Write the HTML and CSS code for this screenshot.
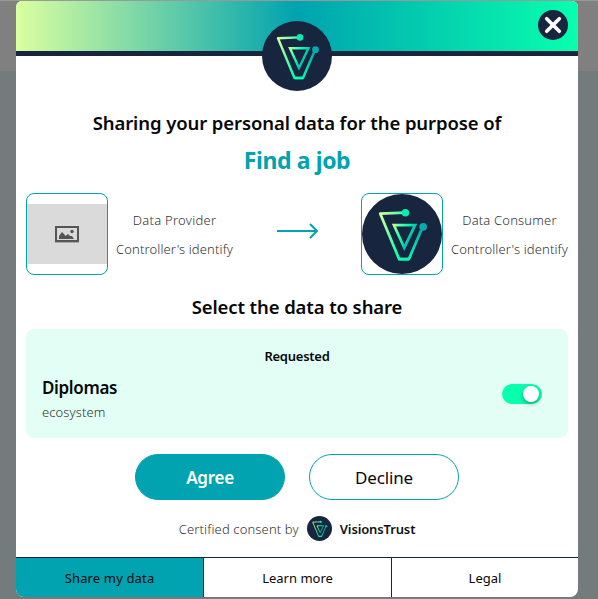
FILE: index.html
```html
<!DOCTYPE html>
<html lang="en">
<head>
<meta charset="utf-8">
<title>VisionsTrust consent</title>
<link rel="stylesheet" href="styles.css">
</head>
<body>
<svg class="defs" width="0" height="0">
  <defs>
    <linearGradient id="stroke-a" gradientUnits="userSpaceOnUse" x1="15" y1="18" x2="40" y2="25"><stop offset="0" stop-color="#dbffa0"/><stop offset="1" stop-color="#08ffae"/></linearGradient>
    <linearGradient id="stroke-b" gradientUnits="userSpaceOnUse" x1="36" y1="58" x2="53" y2="29"><stop offset="0" stop-color="#08ffae"/><stop offset="1" stop-color="#00a8b0"/></linearGradient>
    <linearGradient id="stroke-c" gradientUnits="userSpaceOnUse" x1="27" y1="28" x2="46" y2="38"><stop offset="0" stop-color="#b8ff9f"/><stop offset=".5" stop-color="#08ffae"/><stop offset="1" stop-color="#00a8b0"/></linearGradient>
    <symbol id="logo" viewBox="0 0 70 70">
      <circle cx="35" cy="35" r="35" fill="#17253f"/>
      <g fill="none" stroke-width="2.4" stroke-linejoin="round">
        <path d="M38 16.400 16 17.200 32.500 57H41" stroke="url(#stroke-a)"/>
        <path d="M32.500 57H41L53 29" stroke="url(#stroke-b)"/>
        <path d="M28 27.300H46.500L37 47Z" stroke="url(#stroke-c)" stroke-linejoin="miter"/>
      </g>
      <circle cx="38" cy="16.400" r="3.300" fill="#08edb0"/>
      <circle cx="53.500" cy="28.700" r="3.400" fill="#00aaae"/>
    </symbol>
  </defs>
</svg>
<main class="modal">
  <header class="banner">
    <svg class="banner-logo"><use href="#logo"/></svg>
    <button class="close" aria-label="Close"><svg viewBox="0 0 30 30"><path d="M8.700 8.700 21.300 21.300M21.300 8.700 8.700 21.300"/></svg></button>
  </header>
  <section class="content">
    <h1 class="title"><span class="t-title">Sharing your personal data for the purpose of</span></h1>
    <p class="purpose"><span class="t-purpose">Find a job</span></p>
    <div class="parties">
      <div class="party">
        <div class="thumb"><div class="placeholder"><svg viewBox="0 0 24 17"><path fill="#aaa" d="M0 15H24V17H0Z"/><path fill="#555" fill-rule="evenodd" d="M0 0H24V16H0ZM2 2V14H22V2Z"/><path fill="#555" d="M4 13V10L7 6 9 8 10.500 10 13 8 15 10 17 10 19 13Z"/><circle cx="17" cy="5.500" r="1.700" fill="#555"/></svg></div></div>
        <div class="who"><span class="t-prov">Data Provider</span><span class="t-ident">Controller's identify</span></div>
      </div>
      <svg class="arrow" viewBox="0 0 42 16"><path d="M0 8H40M33 1 40 8 33 15"/></svg>
      <div class="party">
        <div class="thumb"><svg class="thumb-logo"><use href="#logo"/></svg></div>
        <div class="who"><span class="t-cons">Data Consumer</span><span class="t-ident">Controller's identify</span></div>
      </div>
    </div>
    <h2 class="select"><span class="t-select">Select the data to share</span></h2>
    <div class="card">
      <h3 class="requested"><span class="t-req">Requested</span></h3>
      <div class="row">
        <div class="item"><span class="t-dip">Diplomas</span><span class="t-eco">ecosystem</span></div>
        <div class="toggle"><i class="knob"></i></div>
      </div>
    </div>
    <div class="actions">
      <button class="btn primary"><span class="t-agree">Agree</span></button>
      <button class="btn"><span class="t-decline">Decline</span></button>
    </div>
    <div class="certified"><span class="t-cert">Certified consent by</span><svg class="mini"><use href="#logo"/></svg><span class="t-vt">VisionsTrust</span></div>
  </section>
  <nav class="tabs">
    <a class="tab active"><span class="t-share">Share my data</span></a>
    <a class="tab"><span class="t-learn">Learn more</span></a>
    <a class="tab"><span class="t-legal">Legal</span></a>
  </nav>
</main>
</body>
</html>
```

FILE: styles.css
```css
* { box-sizing: border-box; }
body { margin: 0; height: 599px; overflow: hidden; padding: 1px 20px 0 16px; font-family: "Noto Sans", sans-serif; color: #080808; background: linear-gradient(#999 0 1px, #808080 1px 71px, #737b7c 71px); }
h1, h2, h3, p { margin: 0; }
button { padding: 0; font: inherit; color: inherit; }
span { white-space: nowrap; }
.defs { position: absolute; }
.modal { width: 562px; height: 596px; display: flex; flex-direction: column; overflow: hidden; border-radius: 6px 6px 8px 8px; background: #fff; }
.banner { position: relative; flex: none; height: 55px; border-bottom: 5px solid #17253f; background: linear-gradient(90deg, #dbffa0, #00a3af 50%, #08ffae) padding-box; }
.banner-logo { position: absolute; left: 246px; top: 20px; width: 70px; height: 70px; }
.close { position: absolute; right: 10px; top: 9px; width: 30px; height: 30px; border: 0; border-radius: 50%; background: #17253f; }
.close svg { display: block; width: 30px; height: 30px; stroke: #fff; stroke-width: 3.6; stroke-linecap: round; }
.content { flex: 1; padding: 0 10px; }
.title { margin-top: 51px; height: 32px; line-height: 32px; font-size: 18.5px; font-weight: 600; text-align: center; }
.t-title { letter-spacing: -.1px; }
.purpose { height: 36px; margin-top: 3px; line-height: 36px; font-size: 23px; font-weight: 700; color: #00a3af; text-align: center; }
.t-purpose { letter-spacing: -.4px; }
.parties { display: flex; align-items: center; justify-content: space-between; height: 82px; margin-top: 15px; }
.party { display: flex; align-items: center; gap: 8px; }
.thumb { display: flex; align-items: center; width: 82px; height: 82px; overflow: hidden; border: 1px solid #00a3af; border-radius: 8px; }
.placeholder { display: flex; align-items: center; justify-content: center; width: 80px; height: 60px; background: #dadada; }
.placeholder svg { width: 24px; height: 17px; }
.thumb-logo { width: 80px; height: 80px; }
.who { display: flex; flex-direction: column; align-items: center; gap: 9px; font-size: 13px; line-height: 20px; font-weight: 300; color: #333; }
.t-prov { letter-spacing: .27px; }
.t-cons { letter-spacing: .17px; }
.t-ident { letter-spacing: .13px; }
.arrow { width: 42px; height: 16px; margin: -6px 0 0 1px; fill: none; stroke: #00a3af; stroke-width: 2; }
.select { height: 30px; margin-top: 17px; line-height: 30px; font-size: 18.5px; font-weight: 600; text-align: center; }
.t-select { letter-spacing: -.1px; }
.card { height: 109px; margin-top: 7px; padding: 17px 26px 0 16px; border-radius: 8px; background: #e3fff5; }
.requested { height: 20px; margin-right: -10px; line-height: 20px; font-size: 13px; font-weight: 600; text-align: center; }
.t-req { letter-spacing: -.25px; }
.row { display: flex; align-items: flex-start; justify-content: space-between; margin-top: 8px; }
.item { display: flex; flex-direction: column; }
.t-dip { font-size: 17px; line-height: 28px; font-weight: 600; letter-spacing: -.35px; }
.t-eco { font-size: 13px; line-height: 20px; font-weight: 300; color: #333; letter-spacing: .1px; }
.toggle { width: 40px; height: 20px; margin-top: 10px; padding: 2px 3px; border-radius: 10px; background: #08ffae; display: flex; justify-content: flex-end; }
.knob { width: 16px; height: 16px; border-radius: 50%; background: #fff; box-shadow: 0 2px 4px #0005; }
.actions { display: flex; justify-content: center; gap: 24px; margin-top: 16px; }
.btn { width: 150px; height: 46px; border: 1px solid #00a3af; border-radius: 23px; background: #fff; font-size: 17px; letter-spacing: -.15px; }
.btn.primary { background: #00a3af; color: #fff; font-weight: 600; letter-spacing: -.25px; }
.certified { display: flex; align-items: center; justify-content: center; height: 26px; margin-top: 15px; gap: 8px; font-size: 13px; font-weight: 300; color: #333; }
.certified span { padding-top: 1px; }
.t-cert { letter-spacing: .14px; }
.mini { width: 25px; height: 25px; }
.t-vt { font-weight: 600; color: #111; letter-spacing: -.13px; }
.tabs { display: grid; grid-template-columns: 188px 188px 1fr; height: 40px; margin-top: auto; border-top: 1px solid #17253f; font-size: 13px; }
.tab { display: flex; align-items: center; justify-content: center; padding-top: 1px; border-right: 1px solid #17253f; }
.tab:last-child { border-right: 0; }
.tab.active { background: #00a3af; }
.t-share { letter-spacing: .15px; }
```
